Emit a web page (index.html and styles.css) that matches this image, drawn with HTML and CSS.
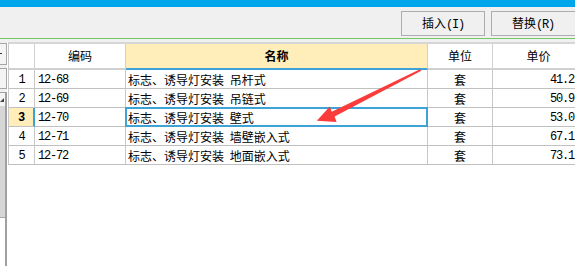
FILE: index.html
```html
<!DOCTYPE html>
<html lang="zh-CN">
<head>
<meta charset="utf-8">
<title>定额选择</title>
<link rel="stylesheet" href="styles.css">
</head>
<body>
<div class="topbar"></div>
<div class="toolbar">
  <button class="btn">插入<span class="key">(I)</span></button>
  <button class="btn btn-last">替换<span class="key">(R)</span></button>
</div>
<div class="main">
  <div class="side">
    <div class="side-gap"></div>
    <div class="side-box"><span class="dash"></span></div>
    <div class="side-box side-box2"></div>
    <div class="scroll">
      <div class="scroll-up"><span class="tri"></span></div>
      <div class="track"></div>
    </div>
  </div>
  <div class="grid-wrap">
    <div class="grid">
      <div class="hc"></div>
      <div class="hc">编码</div>
      <div class="hc hc-sel">名称</div>
      <div class="hc">单位</div>
      <div class="hc">单价</div>

      <div class="c num mono">1</div>
      <div class="c code mono">12-68</div>
      <div class="c name">标志、诱导灯安装 吊杆式</div>
      <div class="c unit">套</div>
      <div class="c price mono">41.2</div>

      <div class="c num mono">2</div>
      <div class="c code mono">12-69</div>
      <div class="c name">标志、诱导灯安装 吊链式</div>
      <div class="c unit">套</div>
      <div class="c price mono">50.9</div>

      <div class="c num num-sel mono">3</div>
      <div class="c code mono">12-70</div>
      <div class="c name name-sel">标志、诱导灯安装 壁式</div>
      <div class="c unit">套</div>
      <div class="c price mono">53.0</div>

      <div class="c num mono">4</div>
      <div class="c code mono">12-71</div>
      <div class="c name">标志、诱导灯安装 墙壁嵌入式</div>
      <div class="c unit">套</div>
      <div class="c price mono">67.1</div>

      <div class="c num mono">5</div>
      <div class="c code mono">12-72</div>
      <div class="c name">标志、诱导灯安装 地面嵌入式</div>
      <div class="c unit">套</div>
      <div class="c price mono">73.1</div>
    </div>
  </div>
</div>
<svg class="arrow" width="575" height="266" viewBox="0 0 575 266">
  <polygon points="420,69.2 421.3,70.7 334.6,116.6 336.6,121.9 316.8,120.8 329.8,106.6 331.7,111.8" fill="#fc3b3b"/>
</svg>
</body>
</html>
```
FILE: styles.css
```css
* { box-sizing: border-box; }
html, body {
  margin: 0;
  padding: 0;
  width: 575px;
  height: 266px;
  overflow: hidden;
}
body {
  font-family: "Noto Sans CJK SC", "Noto Sans", sans-serif;
  font-size: 12px;
  color: #000;
  background: #f0f0f0;
  display: flex;
  flex-direction: column;
  position: relative;
}
.topbar {
  height: 7px;
  background: #00a6eb;
  flex: none;
}
.toolbar {
  height: 32px;
  flex: none;
  display: flex;
  gap: 6px;
  padding: 4px 0 0 401px;
  background: #f0f0f0;
  border-bottom: 1px solid #76c865;
}
.btn {
  width: 84px;
  height: 25px;
  flex: none;
  border: 1px solid #adadad;
  background: #f0f0f0;
  font-family: "Noto Sans CJK SC", sans-serif;
  font-size: 12px;
  line-height: 22px;
  padding: 0;
  margin: 0;
  color: #000;
  border-radius: 0;
}
.btn-last { width: 85px; padding-right: 1px; }
.key {
  font-family: "Liberation Mono", "DejaVu Sans Mono", monospace;
  font-size: 12px;
  letter-spacing: -1.2px;
}
.main {
  flex: 1;
  display: flex;
  min-height: 0;
}
.side {
  width: 7px;
  flex: none;
  display: flex;
  flex-direction: column;
}
.side-gap { height: 4px; }
.side-box {
  height: 22px;
  border: 1px solid #a6a6a6;
  border-left: none;
  background: #f4f4f4;
  margin-bottom: 3px;
}
.side-box2 { height: 21px; }
.dash {
  display: block;
  width: 2px;
  height: 1px;
  background: #333;
  margin-top: 9px;
}
.scroll {
  flex: 1;
  display: flex;
  flex-direction: column;
  border-right: 2px solid #a0a0a0;
  background: #fff;
}
.scroll-up {
  height: 14px;
  border-top: 1px solid #a0a0a0;
  background: #f4f4f4;
  padding: 5px 0 0 0;
}
.tri {
  display: block;
  width: 0;
  height: 0;
  border-left: 4px solid transparent;
  border-bottom: 4px solid #444;
}
.track {
  height: 112px;
  background: #d6d6d6;
  border-bottom: 1px solid #a8a8a8;
}
.grid-wrap {
  flex: 1;
  margin-top: 3px;
  padding-left: 1px;
  background: #fff;
  min-width: 0;
}
.grid {
  display: grid;
  grid-template-columns: 26px 91px 302px 65px 92px;
  grid-auto-rows: 19px;
  grid-template-rows: 26px;
  width: 577px;
  border-left: 1px solid #c8c8c8;
  border-top: 2px solid #d6d6d6;
  background: #fff;
}
.hc {
  border-right: 1px solid #d0d0d0;
  border-bottom: 2px solid #d0d0d0;
  text-align: center;
  line-height: 24px;
  white-space: nowrap;
}
.hc-sel {
  background: #ffeeb9;
  border-bottom-color: #3da2d6;
  font-weight: bold;
}
.c {
  border-right: 1px solid #c8c8c8;
  border-bottom: 1px solid #c0c0c0;
  line-height: 18px;
  white-space: nowrap;
  overflow: hidden;
}
.mono {
  font-family: "Liberation Mono", "DejaVu Sans Mono", monospace;
  font-size: 12px;
  letter-spacing: -1.2px;
  padding-top: 1px;
}
.num { text-align: center; }
.num-sel {
  background: #ffeeb9;
  font-weight: bold;
  border-right: 2px solid #3da2d6;
}
.code { padding-left: 3px; }
.name {
  padding-left: 2px;
  padding-top: 1px;
  word-spacing: 3px;
  position: relative;
  overflow: visible;
}
.name-sel::after {
  content: "";
  position: absolute;
  left: -1px;
  top: -1px;
  right: -1px;
  bottom: -1px;
  border: 2px solid #3da2d6;
}
.unit { text-align: center; padding-top: 1px; }
.price {
  text-align: right;
  padding-right: 10px;
}
.arrow {
  position: absolute;
  left: 0;
  top: 0;
  pointer-events: none;
}
```
